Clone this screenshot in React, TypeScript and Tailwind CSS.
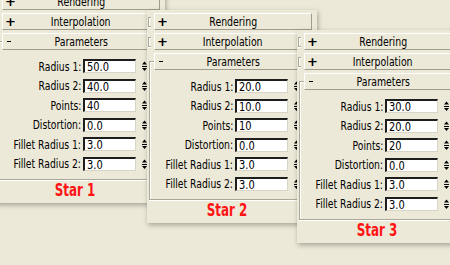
const labels = [
  "Radius 1:",
  "Radius 2:",
  "Points:",
  "Distortion:",
  "Fillet Radius 1:",
  "Fillet Radius 2:",
];

const panels = [
  {
    pos: "left-[-5px] top-[-10px]",
    name: "Star 1",
    values: ["50.0", "40.0", "40", "0.0", "3.0", "3.0"],
  },
  {
    pos: "left-[147px] top-[10px]",
    name: "Star 2",
    values: ["20.0", "10.0", "10", "0.0", "3.0", "3.0"],
  },
  {
    pos: "left-[297px] top-[30px]",
    name: "Star 3",
    values: ["30.0", "20.0", "20", "0.0", "3.0", "3.0"],
  },
];

function Spinner() {
  return (
    <svg width="7" height="14" viewBox="0 0 7 14" className="ml-[5px] shrink-0">
      <path d="M3.5 2.5 L6 5.5 L1 5.5 Z" fill="#000" />
      <rect x="1" y="7" width="5" height="1" fill="#000" />
      <path d="M1 9 L6 9 L3.5 12 Z" fill="#000" />
    </svg>
  );
}

function Bar({ sign, title }: { sign: "+" | "-"; title: string }) {
  return (
    <div className="grid h-[17px] grid-cols-[16px_1fr_16px] items-center border border-t-white border-l-white border-r-[#a09d8e] border-b-[#a09d8e] bg-[#ece9d8]">
      {sign === "+" ? (
        <span className="pl-[2px] text-[13px] font-bold leading-none">+</span>
      ) : (
        <span className="ml-[4px] h-px w-[4px] bg-black" />
      )}
      <span className="text-center text-[13px] leading-none">
        <span className="inline-block origin-center scale-x-[0.72] whitespace-nowrap">
          {title}
        </span>
      </span>
      <span />
    </div>
  );
}

function Collapsed({ title, first }: { title: string; first?: boolean }) {
  return (
    <div className={`flex items-center ${first ? "" : "mt-[3px]"}`}>
      <div className="w-[7px] shrink-0">
        <span className="ml-[1px] block h-[10px] w-[3px] border-y border-l border-[#aca899] shadow-[inset_1px_1px_0_#fff,0_1px_0_#fff]" />
      </div>
      <div className="mr-[5px] flex-1">
        <Bar sign="+" title={title} />
      </div>
    </div>
  );
}

function Row({ label, value }: { label: string; value: string }) {
  return (
    <div className="flex h-[14px] items-center">
      <div className="flex w-[86px] shrink-0 justify-end text-[13px] leading-none">
        <span className="shrink-0 origin-right scale-x-[0.71] whitespace-nowrap">
          {label}
        </span>
      </div>
      <div className="ml-[2px] flex h-[14px] w-[53px] shrink-0 items-center border-t-2 border-l-2 border-r border-b border-t-[#1e1e1e] border-l-[#1e1e1e] border-r-[#d8d5c6] border-b-[#d8d5c6] bg-white pl-[2px] text-[13px] leading-none">
        <span className="inline-block origin-left scale-x-[0.76]">{value}</span>
      </div>
      <Spinner />
    </div>
  );
}

function Panel({ pos, name, values }: (typeof panels)[number]) {
  return (
    <div
      className={`absolute ${pos} h-[213px] w-[170px] overflow-hidden bg-[#ece9d8] pt-[3px] shadow-[1px_2px_5px_rgba(0,0,0,0.3)]`}
    >
      <Collapsed title="Rendering" first />
      <Collapsed title="Interpolation" />
      <div className="relative mt-[3px]">
        <div className="absolute top-[8px] right-[-4px] bottom-0 left-[2px] border-y border-l border-[#aca899] shadow-[inset_1px_1px_0_#fff,0_1px_0_#fff]" />
        <div className="relative mr-[5px] ml-[7px]">
          <Bar sign="-" title="Parameters" />
        </div>
        <div className="relative flex flex-col gap-[5.6px] pt-[9px] pb-[9px]">
          {labels.map((l, i) => (
            <Row key={l} label={l} value={values[i]} />
          ))}
        </div>
      </div>
      <div className="flex h-[22px] w-[160px] items-center justify-center text-[17px] font-bold leading-none text-[#ff1414]">
        <span className="inline-block origin-center scale-x-[0.7] whitespace-nowrap">
          {name}
        </span>
      </div>
    </div>
  );
}

export default function App() {
  return (
    <div className="relative h-[265px] w-[450px] overflow-hidden bg-[#ece9d8] font-['DejaVu_Sans',sans-serif] text-black">
      {panels.map((p) => (
        <Panel key={p.name} {...p} />
      ))}
    </div>
  );
}
